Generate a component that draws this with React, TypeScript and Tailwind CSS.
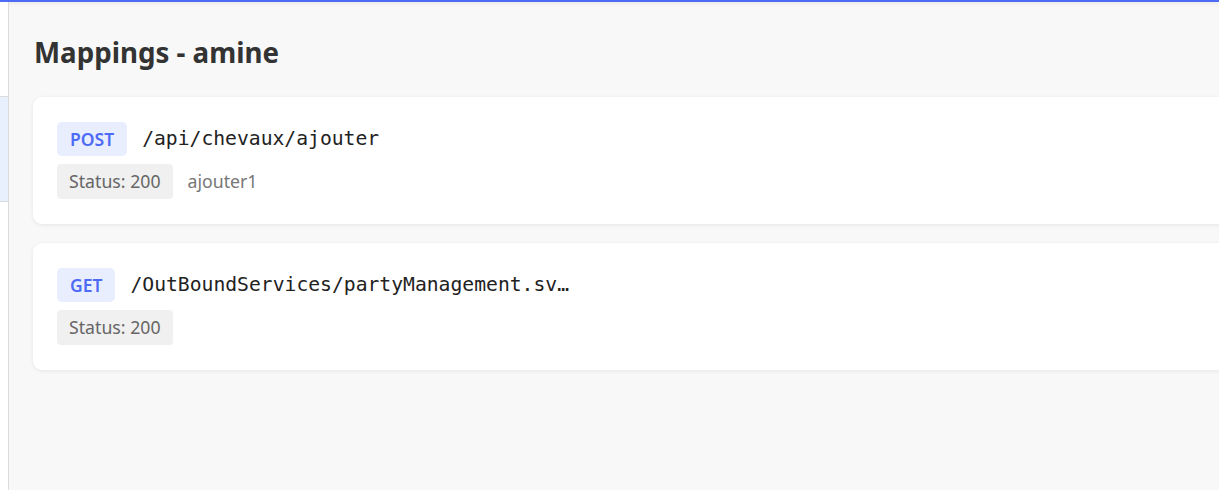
import React from "react";

type Mapping = {
    method: string;
    url: string;
    status: number;
    name?: string;
};

const mappings: Mapping[] = [
    { method: "POST", url: "/api/chevaux/ajouter", status: 200, name: "ajouter1" },
    { method: "GET", url: "/OutBoundServices/partyManagement.svc/findParty", status: 200 },
];

const MappingCard = ({ mapping }: { mapping: Mapping }) => {
    return (
        <div className="w-[1300px] bg-white rounded-[9px] shadow-[0_1px_4px_rgba(0,0,0,0.08)] px-6 py-[25px] flex flex-col gap-2">
            {/* METHOD + URL */}
            <div className="flex items-center gap-[15px]">
                <span className="h-[34px] px-[13px] flex items-center rounded-[5px] bg-[#e8eefe] text-[#4d6bf5] text-[17.5px] font-semibold">
                    {mapping.method}
                </span>
                <span className="max-w-[440px] truncate text-[19.7px] text-[#222] font-['DejaVu_Sans_Mono',monospace]">
                    {mapping.url}
                </span>
            </div>
            {/* STATUS + NAME */}
            <div className="flex items-center gap-[15px]">
                <span className="h-[35px] px-3 flex items-center rounded-[4px] bg-[#f0f0f0] text-[#666] text-[17.7px]">
                    Status: {mapping.status}
                </span>
                {mapping.name && <span className="text-[17.7px] text-[#777]">{mapping.name}</span>}
            </div>
        </div>
    );
};

export default function App() {
    return (
        <div className="h-[490px] w-[1219px] overflow-hidden bg-[#f8f8f8] font-['Noto_Sans',sans-serif] flex flex-col">
            <div className="h-[2px] bg-[#4d6bf5] shadow-[0_1px_4px_rgba(0,0,0,0.12)] shrink-0" />
            <div className="flex flex-1 min-h-0">
                {/* SIDEBAR */}
                <aside className="w-[9px] shrink-0 bg-white border-r border-[#dcdcdc] flex flex-col">
                    <div className="h-[94px]" />
                    <div className="h-[106px] bg-[#e8effd] border-y border-[#dcdcdc]" />
                </aside>
                {/* MAIN */}
                <main className="flex-1 pl-6 pt-[30px] flex flex-col">
                    <h1 className="text-[27.7px] leading-[40px] font-bold text-[#333] pl-[1px]">Mappings - amine</h1>
                    <div className="mt-[25px] flex flex-col gap-[19px]">
                        {mappings.map((m) => (
                            <MappingCard key={m.url} mapping={m} />
                        ))}
                    </div>
                </main>
            </div>
        </div>
    );
}
